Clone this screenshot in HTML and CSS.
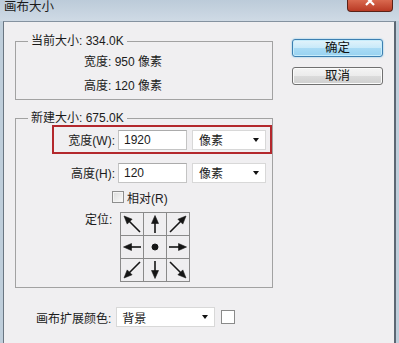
FILE: index.html
```html
<!DOCTYPE html>
<html lang="zh-CN">
<head>
<meta charset="utf-8">
<title>画布大小</title>
<link rel="stylesheet" href="styles.css">
</head>
<body>
<div class="win">
  <div class="titlebar">
    <span class="title">画布大小</span>
    <div class="close">
      <svg width="46" height="12" viewBox="0 0 46 12"><path d="M19 -3 L27 5 M27 -3 L19 5" stroke="#fff" stroke-width="2.2" fill="none"/></svg>
    </div>
  </div>
  <div class="frame">
    <div class="client">
      <div class="left">
        <fieldset class="group g1">
          <legend>当前大小: 334.0K</legend>
          <div class="info">宽度: 950 像素</div>
          <div class="info">高度: 120 像素</div>
        </fieldset>
        <fieldset class="group g2">
          <legend>新建大小: 675.0K</legend>
          <div class="row hl">
            <span class="lbl">宽度(W):</span>
            <div class="input">1920</div>
            <div class="select"><span>像素</span><i class="caret"></i></div>
          </div>
          <div class="row r2">
            <span class="lbl">高度(H):</span>
            <div class="input">120</div>
            <div class="select"><span>像素</span><i class="caret"></i></div>
          </div>
          <div class="check-row">
            <span class="checkbox"></span>
            <span>相对(R)</span>
          </div>
          <div class="anchor-row">
            <span class="anchor-lbl">定位:</span>
            <div class="anchor">
              <div class="cell"><svg viewBox="0 0 22 22"><g><polygon points="3,3 11.1,6.2 6.2,11.1"/><line x1="8" y1="8" x2="19" y2="19"/></g></svg></div>
              <div class="cell"><svg viewBox="0 0 22 22"><g><polygon points="11,2.5 7.5,10.5 14.5,10.5"/><line x1="11" y1="9" x2="11" y2="20"/></g></svg></div>
              <div class="cell"><svg viewBox="0 0 22 22"><g transform="rotate(90 11 11)"><polygon points="3,3 11.1,6.2 6.2,11.1"/><line x1="8" y1="8" x2="19" y2="19"/></g></svg></div>
              <div class="cell"><svg viewBox="0 0 22 22"><g transform="rotate(-90 11 11)"><polygon points="11,2.5 7.5,10.5 14.5,10.5"/><line x1="11" y1="9" x2="11" y2="20"/></g></svg></div>
              <div class="cell"><svg viewBox="0 0 22 22"><circle cx="11" cy="11" r="3"/></svg></div>
              <div class="cell"><svg viewBox="0 0 22 22"><g transform="rotate(90 11 11)"><polygon points="11,2.5 7.5,10.5 14.5,10.5"/><line x1="11" y1="9" x2="11" y2="20"/></g></svg></div>
              <div class="cell"><svg viewBox="0 0 22 22"><g transform="rotate(-90 11 11)"><polygon points="3,3 11.1,6.2 6.2,11.1"/><line x1="8" y1="8" x2="19" y2="19"/></g></svg></div>
              <div class="cell"><svg viewBox="0 0 22 22"><g transform="rotate(180 11 11)"><polygon points="11,2.5 7.5,10.5 14.5,10.5"/><line x1="11" y1="9" x2="11" y2="20"/></g></svg></div>
              <div class="cell"><svg viewBox="0 0 22 22"><g transform="rotate(180 11 11)"><polygon points="3,3 11.1,6.2 6.2,11.1"/><line x1="8" y1="8" x2="19" y2="19"/></g></svg></div>
            </div>
          </div>
        </fieldset>
        <div class="ext">
          <span class="ext-lbl">画布扩展颜色:</span>
          <div class="select wide"><span>背景</span><i class="caret"></i></div>
          <span class="swatch"></span>
        </div>
      </div>
      <div class="right">
        <button class="btn primary">确定</button>
        <button class="btn">取消</button>
      </div>
    </div>
  </div>
</div>
</body>
</html>
```

FILE: styles.css
```css
* { box-sizing: border-box; }

html, body {
  margin: 0;
  padding: 0;
}

body {
  width: 399px;
  height: 343px;
  overflow: hidden;
  font-family: "Liberation Sans", "Noto Sans CJK SC", sans-serif;
  font-size: 12px;
  color: #1b1b1b;
  background: #c3d1de;
}

.win {
  height: 343px;
  display: flex;
  flex-direction: column;
}

.titlebar {
  height: 21px;
  flex: none;
  display: flex;
  justify-content: space-between;
  align-items: flex-start;
  background: linear-gradient(#bccbd9, #cfdae5);
}

.title {
  padding-left: 4px;
  font-size: 12.5px;
  line-height: 15px;
  color: #1a1a1a;
}

.close {
  width: 46px;
  height: 12px;
  margin-right: 6px;
  border: 1px solid #5a2218;
  border-top: none;
  border-radius: 0 0 4px 4px;
  background: linear-gradient(#d9694f, #b93a24);
  overflow: hidden;
}

.close svg { display: block; margin-left: -1px; }

.frame {
  flex: 1;
  display: flex;
  padding: 0 3px;
  background: #bfcedb;
}

.client {
  flex: 1;
  display: flex;
  gap: 19px;
  padding: 12px 0 0 11px;
  background: #f0eff1;
  border-top: 1px solid #8592a0;
  border-left: 1px solid #6a7682;
  border-right: 2px solid #5c6773;
}

.left {
  width: 258px;
  flex: none;
}

.group {
  margin: 0;
  padding: 0;
  border: 1px solid #a2a2a2;
  min-width: 0;
}

.group legend {
  margin-left: 12px;
  padding: 0 3px;
  line-height: 14px;
}

.g1 {
  padding: 2px 0 1px 0;
}

.info {
  line-height: 24px;
  padding-left: 68px;
}

.g2 {
  margin-top: 11px;
  padding-bottom: 5px;
}

.row {
  display: flex;
  align-items: center;
  height: 29px;
  margin-left: 36px;
  border: 2px solid transparent;
}

.row.hl {
  border-color: #b3282d;
}

.row.r2 {
  margin-top: 4px;
}

.lbl {
  width: 61px;
  text-align: right;
}

.input {
  width: 69px;
  height: 20px;
  margin-left: 3px;
  padding-left: 5px;
  line-height: 18px;
  background: #fff;
  border: 1px solid #c4c4c4;
  border-top-color: #ababab;
}

.select {
  width: 74px;
  height: 20px;
  margin-left: 5px;
  padding: 0 6px 0 6px;
  display: flex;
  align-items: center;
  justify-content: space-between;
  background: #fff;
  border: 1px solid #d8d8d8;
}

.caret {
  width: 0;
  height: 0;
  border-left: 3.5px solid transparent;
  border-right: 3.5px solid transparent;
  border-top: 4px solid #111;
}

.check-row {
  display: flex;
  align-items: center;
  gap: 3px;
  height: 18px;
  margin-top: 1px;
  margin-left: 96px;
}

.checkbox {
  width: 12px;
  height: 12px;
  border: 1px solid #8e8e8e;
  background: linear-gradient(135deg, #dcdcdc, #fbfbfb);
  box-shadow: inset 0 0 0 1px #f4f4f4;
}

.anchor-row {
  display: flex;
  align-items: flex-start;
  gap: 8px;
  margin-top: 6px;
  margin-left: 69px;
}

.anchor-lbl {
  line-height: 16px;
}

.anchor {
  display: grid;
  grid-template-columns: repeat(3, 22px);
  grid-template-rows: repeat(3, 22px);
  gap: 1px;
  border: 1px solid #8a8a8a;
  background: #8a8a8a;
}

.cell {
  background: #efeef0;
}

.cell svg {
  display: block;
  width: 22px;
  height: 22px;
  fill: #151515;
  stroke: #151515;
}

.cell line {
  stroke-width: 1.6;
}

.cell polygon {
  stroke-width: 0.6;
  stroke-linejoin: miter;
}

.ext {
  display: flex;
  align-items: center;
  height: 20px;
  margin-top: 19px;
  padding-left: 21px;
}

.select.wide {
  width: 99px;
  margin-left: 5px;
  padding-left: 5px;
}

.swatch {
  width: 14px;
  height: 14px;
  margin-left: 6px;
  background: #fff;
  border: 1px solid #8a8a8a;
}

.right {
  width: 91px;
  flex: none;
  display: flex;
  flex-direction: column;
  gap: 10px;
  margin-top: 5px;
}

.btn {
  height: 18px;
  padding: 0;
  font-family: "Liberation Sans", "Noto Sans CJK SC", sans-serif;
  font-size: 12.5px;
  line-height: 16px;
  color: #111;
  border: 1px solid #707070;
  border-radius: 3px;
  background: linear-gradient(#f4f4f4 0%, #ebebeb 50%, #dbdbdb 51%, #cfcfcf 100%);
  box-shadow: inset 0 0 0 1px #fbfbfb;
}

.btn.primary {
  border-color: #3c7fb1;
  background: linear-gradient(#e2f3fb 0%, #c8eafa 50%, #a9dbf5 51%, #97d2f1 100%);
  box-shadow: inset 0 0 0 1px #c6ecfb, 0 0 2px #6fc0e8;
}
```
